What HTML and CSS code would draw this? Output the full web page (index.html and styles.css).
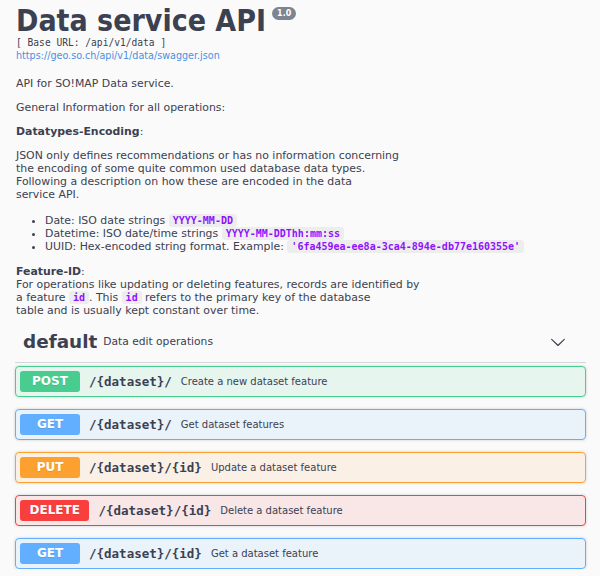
FILE: index.html
```html
<!DOCTYPE html>
<html lang="en">
<head>
<meta charset="utf-8">
<title>Data service API</title>
<link rel="stylesheet" href="styles.css">
</head>
<body>
<div class="wrapper">
  <div class="info">
    <hgroup class="main">
      <h2 class="title"><span class="title-text">Data service API</span><span class="version">1.0</span></h2>
      <pre class="base-url">[ Base URL: /api/v1/data ]</pre>
      <a class="url" href="#">https://geo.so.ch/api/v1/data/swagger.json</a>
    </hgroup>
    <div class="description">
      <p>API for SO!MAP Data service.</p>
      <p>General Information for all operations:</p>
      <p><strong>Datatypes-Encoding</strong>:</p>
      <p>JSON only defines recommendations or has no information concerning<br>the encoding of some quite common used database data types.<br>Following a description on how these are encoded in the data<br>service API.</p>
      <ul>
        <li>Date: ISO date strings <code>YYYY-MM-DD</code></li>
        <li>Datetime: ISO date/time strings <code>YYYY-MM-DDThh:mm:ss</code></li>
        <li>UUID: Hex-encoded string format. Example: <code>'6fa459ea-ee8a-3ca4-894e-db77e160355e'</code></li>
      </ul>
      <p><strong>Feature-ID</strong>:<br>For operations like updating or deleting features, records are identified by<br>a feature <code>id</code>. This <code>id</code> refers to the primary key of the database<br>table and is usually kept constant over time.</p>
    </div>
  </div>

  <section class="tag-section">
    <h3 class="opblock-tag">
      <span class="tag-name">default</span>
      <small class="tag-desc">Data edit operations</small>
      <svg class="arrow" width="16" height="16" viewBox="0 0 20 20" aria-hidden="true"><path d="M17.418 6.109c.272-.268.709-.268.979 0s.271.701 0 .969l-7.908 7.83c-.27.268-.707.268-.979 0l-7.908-7.830c-.27-.268-.27-.701 0-.969.271-.268.709-.268.979 0L10 13.250l7.418-7.141z"/></svg>
    </h3>
    <div class="opblocks">
      <div class="opblock post">
        <span class="method">POST</span>
        <span class="path">/{dataset}/</span>
        <span class="summary">Create a new dataset feature</span>
      </div>
      <div class="opblock get">
        <span class="method">GET</span>
        <span class="path">/{dataset}/</span>
        <span class="summary">Get dataset features</span>
      </div>
      <div class="opblock put">
        <span class="method">PUT</span>
        <span class="path">/{dataset}/{id}</span>
        <span class="summary">Update a dataset feature</span>
      </div>
      <div class="opblock delete">
        <span class="method">DELETE</span>
        <span class="path">/{dataset}/{id}</span>
        <span class="summary">Delete a dataset feature</span>
      </div>
      <div class="opblock get">
        <span class="method">GET</span>
        <span class="path">/{dataset}/{id}</span>
        <span class="summary">Get a dataset feature</span>
      </div>
    </div>
  </section>
</div>
</body>
</html>
```

FILE: styles.css
```css
html, body {
  margin: 0;
  padding: 0;
}

body {
  background: #fafafa;
  color: #3b4151;
  font-family: "DejaVu Sans", sans-serif;
}

.wrapper {
  padding: 5px 14px 0 15px;
}

/* ---------- info header ---------- */
.main {
  margin: 0;
}

.title {
  display: flex;
  align-items: flex-start;
  margin: 0;
  padding-left: 1px;
  height: 32px;
  font-weight: 700;
  color: #3b4151;
}

.title-text {
  font-family: "DejaVu Sans Condensed", "DejaVu Sans", sans-serif;
  font-size: 30px;
  line-height: 31px;
  white-space: nowrap;
}

.version {
  margin: 2px 0 0 6px;
  padding: 0 5px;
  height: 13px;
  line-height: 13px;
  border-radius: 7px;
  background: #7d8492;
  color: #fff;
  font-family: "DejaVu Sans", sans-serif;
  font-size: 8px;
  font-weight: 700;
}

.base-url {
  margin: 0;
  padding-left: 1px;
  font-family: "DejaVu Sans Mono", monospace;
  font-size: 9.6px;
  line-height: 12px;
  color: #3b4151;
}

.url {
  display: block;
  margin-top: 1px;
  padding-left: 1px;
  font-size: 9.6px;
  line-height: 12px;
  color: #4990e2;
  text-decoration: none;
}

/* ---------- description ---------- */
.description {
  margin-top: 14.5px;
  padding-left: 1px;
  font-size: 10.9px;
}

.description p {
  margin: 0 0 11px;
  line-height: 13px;
}

.description p:last-child {
  margin-bottom: 0;
}

.description strong {
  font-weight: 700;
}

.description ul {
  margin: 13px 0 12px;
  padding-left: 29px;
  line-height: 13px;
}

.description code {
  font-family: "DejaVu Sans Mono", monospace;
  font-size: 10px;
  font-weight: 700;
  color: #9012fe;
  background: rgba(0, 0, 0, 0.05);
  padding: 1px 4px;
  border-radius: 3px;
}

/* ---------- tag header ---------- */
.tag-section {
  margin-top: 5.5px;
}

.opblock-tag {
  display: flex;
  align-items: center;
  margin: 0 0 3px;
  padding: 8px 20px 8px 8px;
  border-bottom: 1px solid rgba(59, 65, 81, 0.2);
  font-weight: 400;
}

.tag-name {
  font-size: 18.4px;
  font-weight: 700;
  line-height: 24px;
}

.tag-desc {
  flex: 1;
  padding: 0 6px;
  font-size: 10.7px;
  line-height: 14px;
  color: #3b4151;
}

.arrow {
  fill: #3b4151;
}

/* ---------- operation blocks ---------- */
.opblocks {
  display: flex;
  flex-direction: column;
  gap: 12px;
}

.opblock {
  display: flex;
  align-items: center;
  padding: 4px;
  border: 1px solid;
  border-radius: 4px;
  box-shadow: 0 0 3px rgba(0, 0, 0, 0.19);
}

.method {
  min-width: 60px;
  height: 21px;
  line-height: 21px;
  padding: 0 9.5px;
  box-sizing: border-box;
  border-radius: 3px;
  text-align: center;
  color: #fff;
  font-size: 12px;
  font-weight: 700;
  text-shadow: 0 1px 0 rgba(0, 0, 0, 0.1);
}

.path {
  padding: 0 9px;
  font-family: "DejaVu Sans Mono", monospace;
  font-size: 12.5px;
  font-weight: 700;
  color: #3b4151;
}

.summary {
  font-size: 10px;
  color: #3b4151;
}

.post {
  border-color: #49cc90;
  background: rgba(73, 204, 144, 0.1);
}
.post .method { background: #49cc90; }

.get {
  border-color: #61affe;
  background: rgba(97, 175, 254, 0.1);
}
.get .method { background: #61affe; }

.put {
  border-color: #fca130;
  background: rgba(252, 161, 48, 0.1);
}
.put .method { background: #fca130; }

.delete {
  border-color: #f93e3e;
  background: rgba(249, 62, 62, 0.1);
}
.delete .method { background: #f93e3e; }
```
